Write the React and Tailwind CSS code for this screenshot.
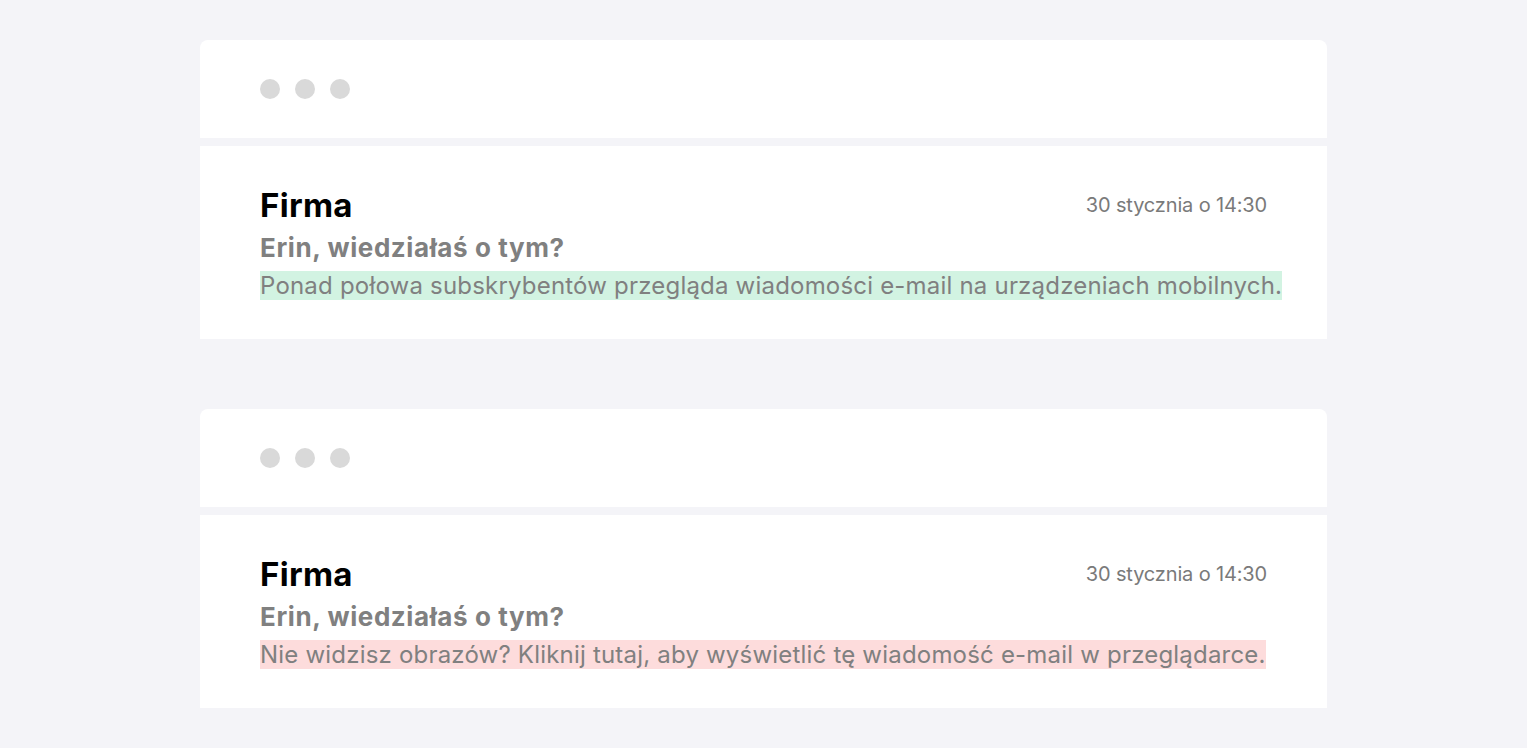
import React from "react";

const emails = [
  {
    id: 1,
    preview:
      "Ponad połowa subskrybentów przegląda wiadomości e-mail na urządzeniach mobilnych.",
    highlight: "bg-[#d2f3e2]",
  },
  {
    id: 2,
    preview:
      "Nie widzisz obrazów? Kliknij tutaj, aby wyświetlić tę wiadomość e-mail w przeglądarce.",
    highlight: "bg-[#fddcdc]",
  },
];

const EmailCard = ({ preview, highlight }) => {
  return (
    <div className="flex flex-col gap-2">
      <div className="h-[98px] bg-white rounded-t-lg flex items-center gap-[15px] pl-[60px]">
        <span className="w-5 h-5 rounded-full bg-[#d9d9d9]"></span>
        <span className="w-5 h-5 rounded-full bg-[#d9d9d9]"></span>
        <span className="w-5 h-5 rounded-full bg-[#d9d9d9]"></span>
      </div>
      <div className="bg-white h-[193px] pt-[39px] px-[60px]">
        <div className="flex items-center justify-between">
          <h2 className="text-[33px] leading-[40px] font-bold text-black tracking-[0.3px]">
            Firma
          </h2>
          <span className="text-[20px] text-[#7a7a7a] -tracking-[0.15px]">30 stycznia o 14:30</span>
        </div>
        <p className="mt-2 text-[26px] leading-[30px] font-bold text-[#808080] tracking-[0.6px]">
          Erin, wiedziałaś o tym?
        </p>
        <p className="mt-2 text-[24px] leading-[30px] text-[#808080] whitespace-nowrap tracking-[0.2px]">
          <span className={highlight}>{preview}</span>
        </p>
      </div>
    </div>
  );
};

export default function App() {
  return (
    <div
      className="min-h-screen bg-[#f4f4f8] px-[200px] py-10 flex flex-col gap-[70px]"
      style={{ fontFamily: "Inter, 'Noto Sans', sans-serif" }}
    >
      {emails.map((email) => (
        <EmailCard key={email.id} {...email} />
      ))}
    </div>
  );
}
